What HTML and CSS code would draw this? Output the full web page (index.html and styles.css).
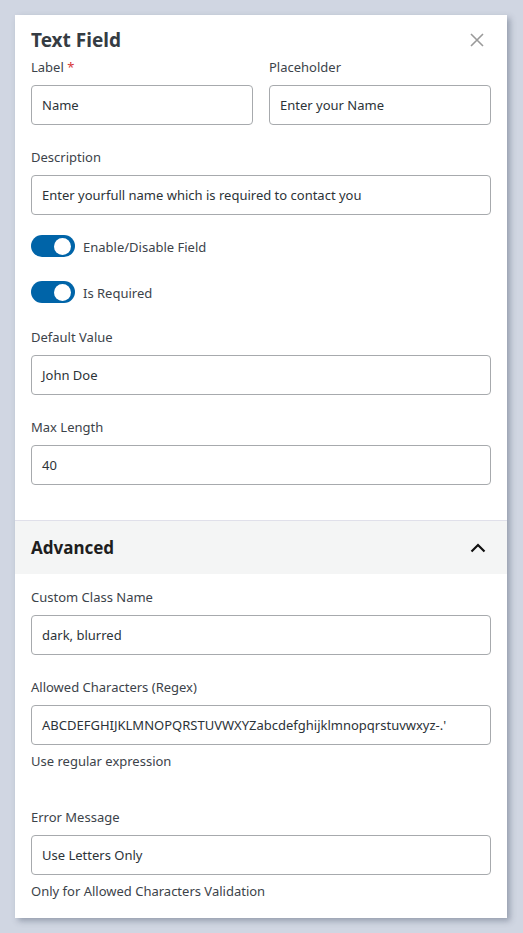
FILE: index.html
```html
<!DOCTYPE html>
<html lang="en">
<head>
<meta charset="utf-8">
<title>Text Field</title>
<link rel="stylesheet" href="styles.css">
</head>
<body>
<div class="panel">
  <div class="section">
    <div class="head">
      <h2 class="title">Text Field</h2>
      <button class="close" aria-label="Close">
        <svg width="14" height="14" viewBox="0 0 14 14"><path d="M1 1L13 13M13 1L1 13" stroke="#9a9a9a" stroke-width="1.6" fill="none"/></svg>
      </button>
    </div>
    <div class="row2">
      <div class="field">
        <label class="lbl">Label <span class="req">*</span></label>
        <div class="input">Name</div>
      </div>
      <div class="field">
        <label class="lbl">Placeholder</label>
        <div class="input">Enter your Name</div>
      </div>
    </div>
    <div class="field">
      <label class="lbl">Description</label>
      <div class="input">Enter yourfull name which is required to contact you</div>
    </div>
    <div class="toggles">
      <div class="toggle-row"><span class="toggle"><span class="knob"></span></span><span class="tlabel">Enable/Disable Field</span></div>
      <div class="toggle-row"><span class="toggle"><span class="knob"></span></span><span class="tlabel">Is Required</span></div>
    </div>
    <div class="field">
      <label class="lbl">Default Value</label>
      <div class="input">John Doe</div>
    </div>
    <div class="field">
      <label class="lbl">Max Length</label>
      <div class="input">40</div>
    </div>
  </div>
  <div class="adv-head">
    <h3 class="adv-title">Advanced</h3>
    <svg width="16" height="10" viewBox="0 0 16 10"><path d="M1.5 8.5L8 2L14.5 8.5" stroke="#111" stroke-width="2.2" fill="none"/></svg>
  </div>
  <div class="section adv">
    <div class="field">
      <label class="lbl">Custom Class Name</label>
      <div class="input">dark, blurred</div>
    </div>
    <div class="field">
      <label class="lbl">Allowed Characters (Regex)</label>
      <div class="input">ABCDEFGHIJKLMNOPQRSTUVWXYZabcdefghijklmnopqrstuvwxyz-.'</div>
      <div class="help">Use regular expression</div>
    </div>
    <div class="field spaced">
      <label class="lbl">Error Message</label>
      <div class="input">Use Letters Only</div>
      <div class="help">Only for Allowed Characters Validation</div>
    </div>
  </div>
</div>
</body>
</html>
```
FILE: styles.css
```css
* { box-sizing: border-box; }
html, body { margin: 0; padding: 0; }
body {
  background: #d0d6e2;
  font-family: "Noto Sans", "Open Sans", sans-serif;
  color: #3c434a;
  padding: 15px 16px 16px 15px;
}
.panel {
  width: 492px;
  background: #fff;
  box-shadow: 3px 3px 6px rgba(80, 90, 110, 0.45);
}
.section {
  padding: 15px 16px 35px;
  display: flex;
  flex-direction: column;
}
.head {
  display: flex;
  justify-content: space-between;
  align-items: center;
  height: 20px;
}
.title {
  margin: 0;
  font-size: 19px;
  font-weight: 700;
  color: #353c43;
  line-height: 20px;
}
.close {
  border: 0;
  background: none;
  padding: 0;
  margin-right: 7px;
  width: 14px;
  height: 14px;
  display: block;
}
.close svg { display: block; }
.row2 {
  display: grid;
  grid-template-columns: 1fr 1fr;
  gap: 16px;
  margin-top: 8px;
}
.field {
  display: flex;
  flex-direction: column;
  margin-top: 23px;
}
.row2 .field { margin-top: 0; }
.lbl {
  font-size: 13px;
  line-height: 18px;
  color: #3c434a;
  margin-bottom: 9px;
}
.req { color: #d63638; }
.input {
  height: 40px;
  border: 1px solid #a7aaad;
  border-radius: 4px;
  padding: 1px 10px 0;
  font-size: 13px;
  line-height: 37px;
  color: #2c3338;
  white-space: nowrap;
  overflow: hidden;
}
.help {
  font-size: 13px;
  line-height: 18px;
  margin-top: 7px;
  color: #3c434a;
}
.toggles {
  display: flex;
  flex-direction: column;
  gap: 24px;
  margin-top: 20px;
  margin-bottom: 2px;
}
.toggle-row {
  display: flex;
  align-items: center;
  gap: 8px;
  height: 22px;
}
.toggle {
  width: 44px;
  height: 22px;
  border-radius: 11px;
  background: #0064a8;
  position: relative;
  flex: none;
}
.knob {
  position: absolute;
  top: 2.5px;
  right: 4px;
  width: 17px;
  height: 17px;
  border-radius: 50%;
  background: #fff;
}
.tlabel { font-size: 13px; line-height: 18px; padding-top: 2px; color: #3c434a; }
.adv-head {
  border-top: 1px solid #e0e0ea;
  background: #f4f5f5;
  height: 54px;
  padding: 0 21px 0 16px;
  display: flex;
  align-items: center;
  justify-content: space-between;
}
.adv-title {
  margin: 0;
  font-size: 17px;
  font-weight: 700;
  color: #1e1e1e;
}
.section.adv { padding-top: 14px; padding-bottom: 18px; }
.section.adv .field:first-child { margin-top: 0; }
.field.spaced { margin-top: 38px; }
```
